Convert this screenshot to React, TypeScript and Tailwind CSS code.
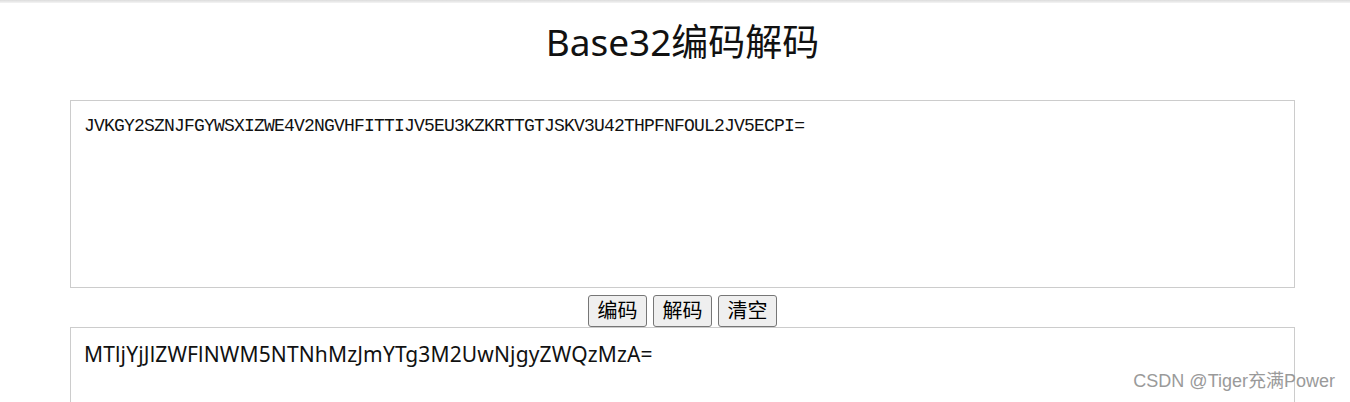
import React from 'react';

const encoded = 'JVKGY2SZNJFGYWSXIZWE4V2NGVHFITTIJV5EU3KZKRTTGTJSKV3U42THPFNFOUL2JV5ECPI=';
const decoded = 'MTljYjJlZWFlNWM5NTNhMzJmYTg3M2UwNjgyZWQzMzA=';

const cjk = "font-['Noto_Sans','Noto_Sans_CJK_SC',sans-serif]";

const App: React.FC = () => {
  return (
    <div className="relative h-[402px] overflow-hidden bg-white text-[#111]">
      {/* top shadow strip */}
      <div className="h-[3px] bg-gradient-to-b from-[#dcdcdc] to-[#f4f4f4]" />

      <div className="ml-[70px] w-[1225px]">
        <h1 className={`pt-[11px] text-center text-[37px] leading-[55px] font-normal ${cjk}`}>
          Base32编码解码
        </h1>

        <textarea
          readOnly
          defaultValue={encoded}
          className="mt-[31px] block h-[188px] w-full resize-none border border-[#cccccc] px-[13px] pt-[12px] font-['Liberation_Mono',monospace] text-[18px] leading-[27px] tracking-[-0.8px] text-[#111] outline-none"
        />

        <div className="flex justify-center gap-[6px] pt-[7px]">
          {['编码', '解码', '清空'].map((label) => (
            <button
              key={label}
              className={`h-[32px] w-[59px] rounded-[3px] border border-[#767676] bg-[#efefef] text-[20px] leading-none text-black ${cjk}`}
            >
              {label}
            </button>
          ))}
        </div>

        <textarea
          readOnly
          defaultValue={decoded}
          className={`block h-[188px] w-full resize-none border border-[#cccccc] px-[13px] pt-[11px] text-[21px] leading-[30px] tracking-[0.15px] text-[#111] outline-none ${cjk}`}
        />
      </div>

      {/* watermark */}
      <div className="absolute right-[15px] bottom-[12px] font-['Liberation_Sans','Noto_Sans_CJK_SC',sans-serif] text-[18px] leading-none text-[#9a9a9a]">
        CSDN @Tiger充满Power
      </div>
    </div>
  );
};

export default App;
